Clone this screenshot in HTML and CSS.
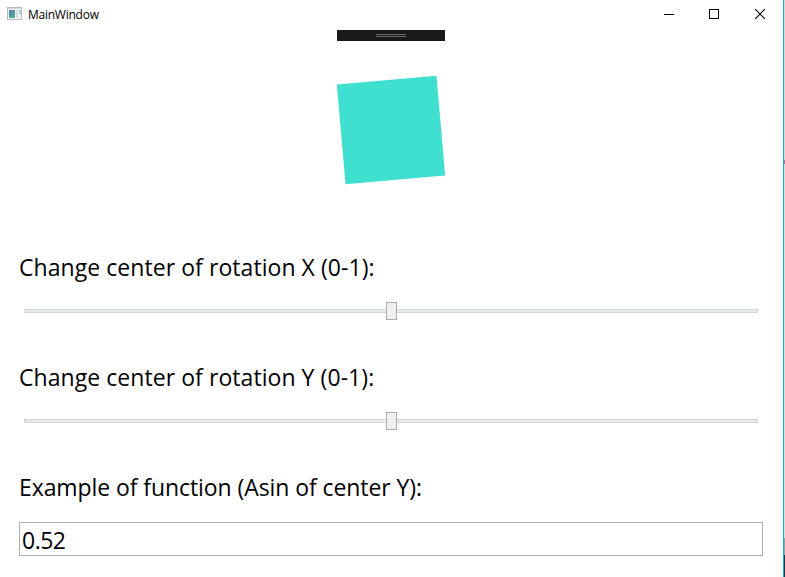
FILE: index.html
```html
<!DOCTYPE html>
<html>
<head lang="en">
	<meta charset="utf-8">
	<title>MainWindow</title>
	<link rel="stylesheet" href="styles.css">
</head>
<body>
	<div class="window">
		<div class="title-bar">
			<svg class="app-icon" width="16" height="14" viewBox="0 0 16 14">
				<defs>
					<linearGradient id="pane" x1="0" y1="0" x2="1" y2="1">
						<stop offset="0" stop-color="#4a86b0"/>
						<stop offset="1" stop-color="#56b08c"/>
					</linearGradient>
				</defs>
				<rect x="0.5" y="0.5" width="14" height="12" fill="#f6f6f8" stroke="#b4b7bd"/>
				<rect x="1" y="1" width="13" height="1" fill="#d5d7dc"/>
				<rect x="2" y="3" width="6" height="8" fill="url(#pane)"/>
				<rect x="9" y="3" width="2" height="8" fill="#d3dae0"/>
				<rect x="12" y="3" width="2" height="4" fill="#a9d3c6"/>
			</svg>
			<span class="title">MainWindow</span>
			<div class="title-buttons">
				<svg width="46" height="30" viewBox="0 0 46 30"><path d="M18 14.5h10" stroke="#000"/></svg>
				<svg width="46" height="30" viewBox="0 0 46 30"><rect x="17.5" y="9.5" width="9" height="9" fill="none" stroke="#000"/></svg>
				<svg width="46" height="30" viewBox="0 0 46 30"><path d="M17.2 9.2l9.6 9.6M26.8 9.2l-9.6 9.6" stroke="#000" stroke-width="1.1"/></svg>
			</div>
		</div>
		<div class="debug-bar"><span class="grip"></span></div>
		<div class="stage"><div class="square"></div></div>
		<div class="row">
			<label class="label label-center">Change center of rotation X (0-1):</label>
			<div class="slider"><div class="thumb"></div></div>
		</div>
		<div class="row">
			<label class="label label-center">Change center of rotation Y (0-1):</label>
			<div class="slider"><div class="thumb"></div></div>
		</div>
		<div class="row">
			<label class="label label-asin">Example of function (Asin of center Y):</label>
			<div class="text-box">0.52</div>
		</div>
	</div>
	<div class="edge"></div>
</body>
</html>
```
FILE: styles.css
```css
body{
	margin: 0;
	display: flex;
	width: 785px;
	height: 577px;
	overflow: hidden;
	background: #fff;
	color: #000;
	font-family: "Open Sans", "Noto Sans", sans-serif;
}
.window{
	width: 783px;
	height: 577px;
}
.title-bar{
	display: flex;
	align-items: center;
	height: 30px;
}
.app-icon{
	margin: 0 5px 2px 7px;
}
.title{
	height: 30px;
	line-height: 30px;
	font-size: 12px;
	letter-spacing: -0.25px;
}
.title-buttons{
	display: flex;
	margin: 0 -1px 0 auto;
}
.title-buttons svg{
	display: block;
}
.debug-bar{
	display: flex;
	align-items: center;
	justify-content: center;
	width: 108px;
	height: 11px;
	margin-left: 337px;
	background: #1a1a1a;
}
.grip{
	width: 30px;
	height: 1px;
	border-top: 1px solid #686868;
	border-bottom: 1px solid #686868;
}
.stage{
	height: 149px;
	padding-top: 39px;
	box-sizing: border-box;
}
.square{
	width: 100px;
	height: 100px;
	margin-left: 341px;
	background: #40e0d0;
	transform: rotate(-5deg);
}
.row{
	height: 110px;
	padding: 60px 20px 0 19px;
	box-sizing: border-box;
}
.label{
	display: block;
	height: 36px;
	line-height: 34px;
	font-size: 23px;
	white-space: nowrap;
}
.label-center{
	letter-spacing: 0.06px;
}
.label-asin{
	letter-spacing: -0.08px;
}
.slider{
	display: flex;
	align-items: center;
	justify-content: center;
	width: 732px;
	height: 2px;
	margin: 23px 0 0 5px;
	border: 1px solid #d6d6d6;
	background: #e7eaea;
}
.thumb{
	flex: none;
	width: 9px;
	height: 16px;
	border: 1px solid #acacac;
	background: #f0f0f0;
}
.text-box{
	height: 32px;
	margin-top: 16px;
	padding-left: 2px;
	border: 1px solid #abadb3;
	line-height: 34px;
	font-size: 23px;
	letter-spacing: -0.5px;
}
/* window border and the strip of desktop behind it */
.edge{
	width: 1px;
	border-left: 1px solid #18b4c8;
	background: linear-gradient(#c8dfe2 160px, #b070a8 160px, #b070a8 164px, #c8e4e6 164px, #c8e4e6 538px, #8ea4ac 538px, #8ea4ac 555px, #17384c 555px);
}
```
